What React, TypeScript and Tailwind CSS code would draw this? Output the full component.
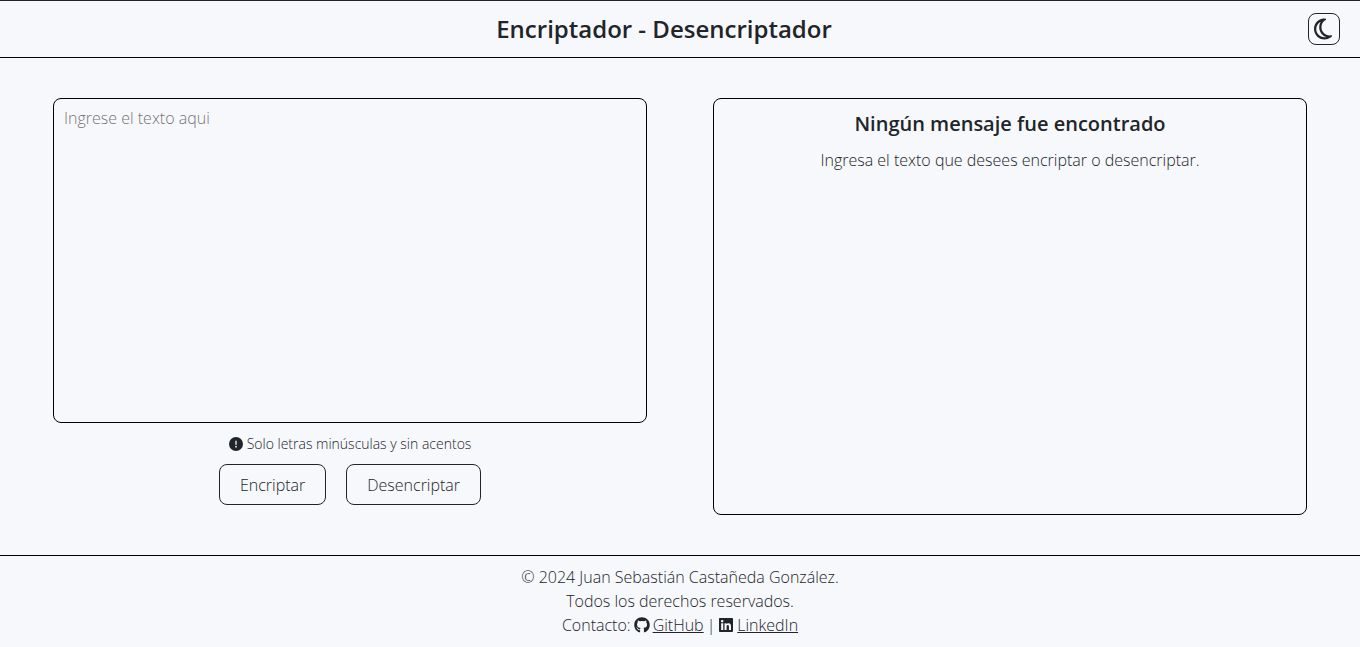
import { useState } from "react";
import { FaCircleExclamation, FaGithub, FaLinkedin, FaRegMoon } from "react-icons/fa6";

const buttonClass =
  "h-[41px] cursor-pointer rounded-lg border border-[#212529] px-5 text-base leading-6 font-light";

export default function App() {
  const [text, setText] = useState("");

  return (
    <div className="flex min-h-screen flex-col border-t border-[#212529] bg-[#f7f8fc] font-['Open_Sans',sans-serif] text-base leading-6 font-light text-[#212529]">
      <header className="flex items-center border-b border-black px-5 py-3">
        <h1 className="flex-1 text-center text-2xl leading-7 font-semibold">
          Encriptador - Desencriptador
        </h1>
        <button
          type="button"
          aria-label="Modo oscuro"
          className="flex size-8 cursor-pointer items-center justify-center rounded-lg border border-[#212529] pr-0.5"
        >
          <FaRegMoon className="size-6" />
        </button>
      </header>

      <main className="flex flex-1 justify-around px-5 py-10">
        <section className="flex w-[45%] flex-col items-center">
          <textarea
            aria-label="Texto"
            placeholder="Ingrese el texto aqui"
            value={text}
            onChange={(e) => setText(e.target.value)}
            className="w-full flex-1 resize-none rounded-lg border border-black px-2.5 py-[7px] placeholder:text-[#757575]"
          />
          <p className="my-2.5 flex items-center gap-1 text-sm leading-[21px]">
            <FaCircleExclamation className="size-3.5" />
            Solo letras minúsculas y sin acentos
          </p>
          <div className="mb-2.5 flex gap-5">
            <button type="button" className={buttonClass}>
              Encriptar
            </button>
            <button type="button" className={buttonClass}>
              Desencriptar
            </button>
          </div>
        </section>

        <section className="w-[45%] rounded-lg border border-black px-2.5 py-[9px] text-center">
          <h2 className="text-xl leading-8 font-semibold">Ningún mensaje fue encontrado</h2>
          <p className="mt-2">Ingresa el texto que desees encriptar o desencriptar.</p>
        </section>
      </main>

      <footer className="border-t border-black pt-[9px] pb-2.5 text-center">
        <p>© 2024 Juan Sebastián Castañeda González.</p>
        <p>Todos los derechos reservados.</p>
        <p className="flex items-center justify-center gap-[3px]">
          Contacto:
          <FaGithub />
          <a href="https://github.com" className="underline">
            GitHub
          </a>
          |
          <FaLinkedin />
          <a href="https://www.linkedin.com" className="underline">
            LinkedIn
          </a>
        </p>
      </footer>
    </div>
  );
}
